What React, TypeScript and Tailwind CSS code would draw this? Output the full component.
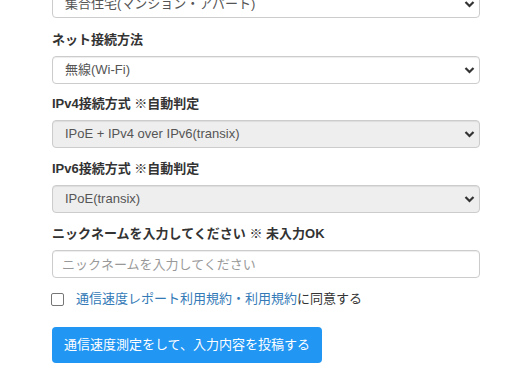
import React from "react";

const Chevron = () => (
  <svg
    className="pointer-events-none absolute right-[5px] top-1/2 -translate-y-1/2"
    width="11"
    height="10"
    viewBox="0 0 11 10"
  >
    <path d="M1.5 3 L5.5 7 L9.5 3" fill="none" stroke="#333" strokeWidth="2.2" />
  </svg>
);

const SelectBox = ({ value, disabled = false }: { value: string; disabled?: boolean }) => (
  <div className="relative h-[28px] w-full">
    <select
      defaultValue={value}
      disabled={disabled}
      className={`h-full w-full appearance-none rounded-[4px] border border-[#ccc] pl-[12px] pr-6 text-[13px] text-[#555] opacity-100 shadow-[inset_0_1px_1px_rgba(0,0,0,0.075)] outline-none ${
        disabled ? "bg-[#eee]" : "bg-white"
      }`}
    >
      <option>{value}</option>
    </select>
    <Chevron />
  </div>
);

const Label = ({ children }: { children: React.ReactNode }) => (
  <div className="mb-[6px] h-[20px] text-[13px] font-bold leading-[20px] text-[#333]">{children}</div>
);

const App = () => {
  return (
    <div
      className="h-[389px] w-[528px] overflow-hidden bg-white pl-[52px]"
      style={{ fontFamily: '"Liberation Sans", "Noto Sans CJK JP", sans-serif' }}
    >
      <div className="-mt-[10px] w-[428px]">
        <div className="mb-[12px]">
          <SelectBox value="集合住宅(マンション・アパート)" />
        </div>

        <Label>ネット接続方法</Label>
        <div className="mb-[10px]">
          <SelectBox value="無線(Wi-Fi)" />
        </div>

        <Label>IPv4接続方式 ※自動判定</Label>
        <div className="mb-[11px]">
          <SelectBox value="IPoE + IPv4 over IPv6(transix)" disabled />
        </div>

        <Label>IPv6接続方式 ※自動判定</Label>
        <div className="mb-[11px]">
          <SelectBox value="IPoE(transix)" disabled />
        </div>

        <Label>ニックネームを入力してください ※ 未入力OK</Label>
        <input
          placeholder="ニックネームを入力してください"
          className="h-[28px] w-full rounded-[4px] border border-[#ccc] px-[9px] text-[13px] text-[#555] shadow-[inset_0_1px_1px_rgba(0,0,0,0.075)] outline-none placeholder:text-[#999]"
        />

        <div className="mt-[11px] flex h-[20px] items-center text-[13px]">
          <span className="-ml-px mr-[12px] h-[13px] w-[13px] rounded-[2px] border border-[#767676] bg-white" />
          <span className="text-[#337ab7]">通信速度レポート利用規約</span>
          <span className="text-[#337ab7]">・</span>
          <span className="text-[#337ab7]">利用規約</span>
          <span className="text-[#333]">に同意する</span>
        </div>

        <button className="mt-[18px] h-[36px] rounded-[4px] bg-[#2196f3] px-[12px] text-[13px] text-white">
          通信速度測定をして、入力内容を投稿する
        </button>
      </div>
    </div>
  );
};

export default App;
